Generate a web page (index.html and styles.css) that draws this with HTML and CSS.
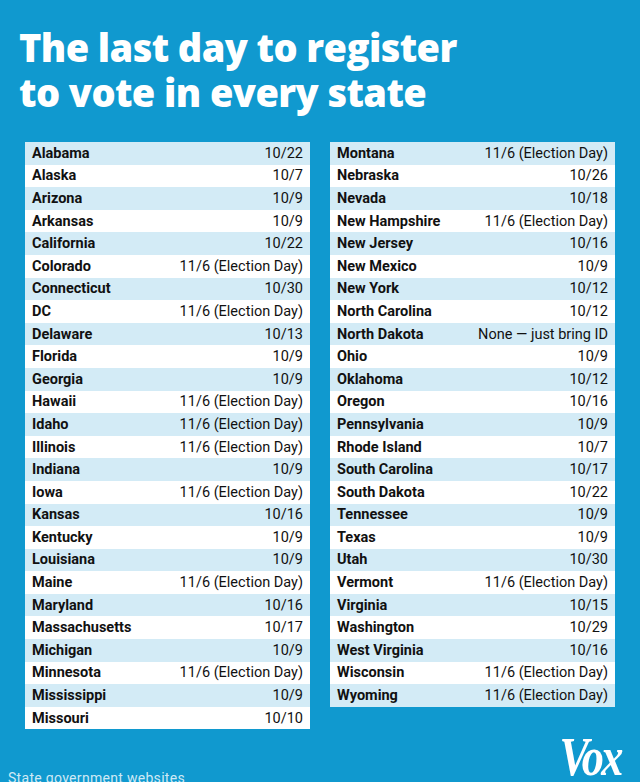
FILE: index.html
```html
<!DOCTYPE html>
<html lang="en">
<head>
<meta charset="utf-8">
<title>The last day to register to vote in every state</title>
<link rel="stylesheet" href="styles.css">
</head>
<body>
<main class="card">
  <h1 class="title">The last day to register<br>to vote in every state</h1>
  <div class="tables">
    <div class="table">
      <div class="row"><span class="state">Alabama</span><span class="date">10/22</span></div>
      <div class="row"><span class="state">Alaska</span><span class="date">10/7</span></div>
      <div class="row"><span class="state">Arizona</span><span class="date">10/9</span></div>
      <div class="row"><span class="state">Arkansas</span><span class="date">10/9</span></div>
      <div class="row"><span class="state">California</span><span class="date">10/22</span></div>
      <div class="row"><span class="state">Colorado</span><span class="date">11/6 (Election Day)</span></div>
      <div class="row"><span class="state">Connecticut</span><span class="date">10/30</span></div>
      <div class="row"><span class="state">DC</span><span class="date">11/6 (Election Day)</span></div>
      <div class="row"><span class="state">Delaware</span><span class="date">10/13</span></div>
      <div class="row"><span class="state">Florida</span><span class="date">10/9</span></div>
      <div class="row"><span class="state">Georgia</span><span class="date">10/9</span></div>
      <div class="row"><span class="state">Hawaii</span><span class="date">11/6 (Election Day)</span></div>
      <div class="row"><span class="state">Idaho</span><span class="date">11/6 (Election Day)</span></div>
      <div class="row"><span class="state">Illinois</span><span class="date">11/6 (Election Day)</span></div>
      <div class="row"><span class="state">Indiana</span><span class="date">10/9</span></div>
      <div class="row"><span class="state">Iowa</span><span class="date">11/6 (Election Day)</span></div>
      <div class="row"><span class="state">Kansas</span><span class="date">10/16</span></div>
      <div class="row"><span class="state">Kentucky</span><span class="date">10/9</span></div>
      <div class="row"><span class="state">Louisiana</span><span class="date">10/9</span></div>
      <div class="row"><span class="state">Maine</span><span class="date">11/6 (Election Day)</span></div>
      <div class="row"><span class="state">Maryland</span><span class="date">10/16</span></div>
      <div class="row"><span class="state">Massachusetts</span><span class="date">10/17</span></div>
      <div class="row"><span class="state">Michigan</span><span class="date">10/9</span></div>
      <div class="row"><span class="state">Minnesota</span><span class="date">11/6 (Election Day)</span></div>
      <div class="row"><span class="state">Mississippi</span><span class="date">10/9</span></div>
      <div class="row"><span class="state">Missouri</span><span class="date">10/10</span></div>
    </div>
    <div class="table">
      <div class="row"><span class="state">Montana</span><span class="date">11/6 (Election Day)</span></div>
      <div class="row"><span class="state">Nebraska</span><span class="date">10/26</span></div>
      <div class="row"><span class="state">Nevada</span><span class="date">10/18</span></div>
      <div class="row"><span class="state">New Hampshire</span><span class="date">11/6 (Election Day)</span></div>
      <div class="row"><span class="state">New Jersey</span><span class="date">10/16</span></div>
      <div class="row"><span class="state">New Mexico</span><span class="date">10/9</span></div>
      <div class="row"><span class="state">New York</span><span class="date">10/12</span></div>
      <div class="row"><span class="state">North Carolina</span><span class="date">10/12</span></div>
      <div class="row"><span class="state">North Dakota</span><span class="date">None — just bring ID</span></div>
      <div class="row"><span class="state">Ohio</span><span class="date">10/9</span></div>
      <div class="row"><span class="state">Oklahoma</span><span class="date">10/12</span></div>
      <div class="row"><span class="state">Oregon</span><span class="date">10/16</span></div>
      <div class="row"><span class="state">Pennsylvania</span><span class="date">10/9</span></div>
      <div class="row"><span class="state">Rhode Island</span><span class="date">10/7</span></div>
      <div class="row"><span class="state">South Carolina</span><span class="date">10/17</span></div>
      <div class="row"><span class="state">South Dakota</span><span class="date">10/22</span></div>
      <div class="row"><span class="state">Tennessee</span><span class="date">10/9</span></div>
      <div class="row"><span class="state">Texas</span><span class="date">10/9</span></div>
      <div class="row"><span class="state">Utah</span><span class="date">10/30</span></div>
      <div class="row"><span class="state">Vermont</span><span class="date">11/6 (Election Day)</span></div>
      <div class="row"><span class="state">Virginia</span><span class="date">10/15</span></div>
      <div class="row"><span class="state">Washington</span><span class="date">10/29</span></div>
      <div class="row"><span class="state">West Virginia</span><span class="date">10/16</span></div>
      <div class="row"><span class="state">Wisconsin</span><span class="date">11/6 (Election Day)</span></div>
      <div class="row"><span class="state">Wyoming</span><span class="date">11/6 (Election Day)</span></div>
    </div>
  </div>
  <footer class="footer">
    <p class="source">State government websites</p>
    <div class="logo">Vox</div>
  </footer>
</main>
</body>
</html>
```

FILE: styles.css
```css
html, body {
  margin: 0;
  padding: 0;
}
body {
  background: #1099cf;
  width: 640px;
  height: 782px;
  overflow: hidden;
  font-family: Roboto, "Liberation Sans", sans-serif;
}
.card {
  display: flex;
  flex-direction: column;
}
.title {
  margin: 25px 0 0 19px;
  font-family: "Open Sans", Roboto, sans-serif;
  font-weight: 800;
  font-size: 38px;
  line-height: 45px;
  letter-spacing: -0.6px;
  color: #ffffff;
}
.tables {
  display: flex;
  align-items: flex-start;
  gap: 20px;
  margin: 27px 0 0 25px;
}
.table {
  width: 285px;
  display: flex;
  flex-direction: column;
  background: #ffffff;
}
.row {
  height: 22.6px;
  display: flex;
  align-items: center;
  justify-content: space-between;
  padding: 0 7px;
  font-size: 14.5px;
  color: #111111;
}
.row:nth-child(odd) {
  background: #d3ebf6;
}
.state {
  font-weight: 700;
}
.date {
  font-weight: 400;
}
.footer {
  display: flex;
  justify-content: space-between;
  align-items: flex-start;
  margin-top: 1px;
}
.source {
  margin: 40px 0 0 8px;
  font-size: 14px;
  color: #cfe9f5;
  letter-spacing: 0.3px;
}
.logo {
  margin-right: 19px;
  font-family: "Liberation Serif", "DejaVu Serif", serif;
  font-style: italic;
  font-weight: 700;
  font-size: 54px;
  line-height: 54px;
  letter-spacing: -3px;
  color: #ffffff;
  transform: scaleX(0.82);
  transform-origin: right center;
}
```
